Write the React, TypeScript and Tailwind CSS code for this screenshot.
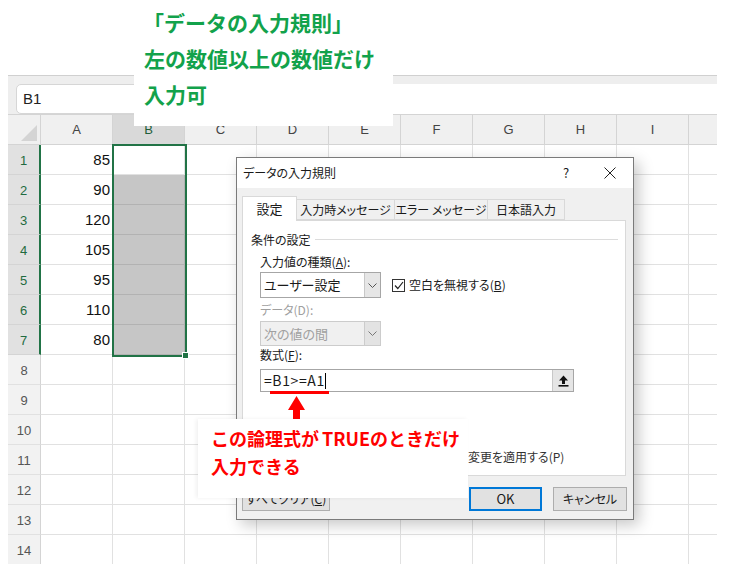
import React from "react";

// Excel sheet with the "データの入力規則" dialog and two callouts on top.

const COLS = ["A", "B", "C", "D", "E", "F", "G", "H", "I"];
const VALUES: (number | null)[] = [85, 90, 120, 105, 95, 110, 80, null, null, null, null, null, null, null];

const jp = "font-['Meiryo_UI','Noto_Sans_CJK_JP',sans-serif] [font-feature-settings:'palt']";

function Chevron({ color = "#555" }: { color?: string }) {
    return (
        <svg width="9" height="5" viewBox="0 0 9 5">
            <path d="M0.5 0.5 L4.5 4.5 L8.5 0.5" fill="none" stroke={color} strokeWidth="1" />
        </svg>
    );
}

function Sheet() {
    return (
        <div className="w-[709px] ml-[8px] mt-[75px] font-['Liberation_Sans',sans-serif]">
            {/* Formula bar */}
            <div className="h-[39px] bg-[#eeeeee] border-t border-[#d0d0d0] pt-[8px] pl-[8px] flex">
                <div className="w-[130px] h-[30px] bg-white border border-[#d6d6d6] rounded-l-[5px] flex items-center pl-[6px] text-[15px] text-[#222]">
                    B1
                </div>
                <div className="flex-1 h-[30px] bg-white" />
            </div>

            {/* Column headers */}
            <div className="flex h-[31px] bg-[#f0f0f0] border-t border-[#d4d4d4] border-b border-[#bdbdbd]">
                <div className="w-[33px] border-r border-[#d4d4d4] flex items-end justify-end pr-[3px] pb-[3px]">
                    <svg width="16" height="16" viewBox="0 0 16 16">
                        <path d="M16 0 L16 16 L0 16 Z" fill="#d4d4d4" />
                    </svg>
                </div>
                {COLS.map((c) => (
                    <div
                        key={c}
                        className={
                            c === "B"
                                ? "w-[72px] bg-[#d9d9d9] border-r border-[#d4d4d4] flex items-center justify-center text-[13px] text-[#1f5e3a]"
                                : "w-[72px] border-r border-[#d4d4d4] flex items-center justify-center text-[13px] text-[#444]"
                        }
                    >
                        {c}
                    </div>
                ))}
                <div className="flex-1" />
            </div>

            {/* Rows */}
            {VALUES.map((v, i) => {
                const sel = i < 7;
                return (
                    <div key={i} className="flex h-[30px]">
                        <div
                            className={
                                sel
                                    ? "w-[33px] bg-[#e1e1e1] border-r-2 border-[#217346] border-b border-b-[#d4d4d4] flex items-center justify-center pt-[3px] text-[13px] text-[#1f6b40]"
                                    : "w-[33px] bg-[#f2f2f2] border-r border-[#d4d4d4] border-b border-b-[#e1e1e1] flex items-center justify-center pt-[3px] text-[13px] text-[#555]"
                            }
                        >
                            {i + 1}
                        </div>
                        <div className="w-[72px] border-r border-b border-[#e1e1e1] flex items-center justify-end pr-[2px] pt-[1px] text-[15px] text-[#111]">
                            {v}
                        </div>
                        <div
                            className={
                                sel && i > 0
                                    ? "w-[72px] bg-[#c6c6c6] border-r border-b border-[#b2b2b2]"
                                    : "w-[72px] border-r border-b border-[#e1e1e1]"
                            }
                        />
                        {COLS.slice(2).map((c) => (
                            <div key={c} className="w-[72px] border-r border-b border-[#e1e1e1]" />
                        ))}
                        <div className="flex-1 border-b border-[#e1e1e1]" />
                    </div>
                );
            })}
        </div>
    );
}

function Dialog() {
    return (
        <div className={`absolute left-[236px] top-[157px] w-[398px] h-[363px] border border-[#7a7a7a] bg-[#f0f0f0] shadow-[5px_5px_14px_rgba(0,0,0,0.22)] text-[#1a1a1a] ${jp}`}>
            {/* Title bar */}
            <div className="h-[30px] bg-white flex items-center pl-[6px] pr-[13px] text-[12px]">
                <span className="flex-1">データの入力規則</span>
                <span className="w-[20px] text-center text-[13px]">?</span>
                <span className="w-[24px]" />
                <span className="w-[20px] flex justify-center">
                    <svg width="12" height="12" viewBox="0 0 12 12">
                        <path d="M0.5 0.5 L11.5 11.5 M11.5 0.5 L0.5 11.5" stroke="#222" strokeWidth="1" />
                    </svg>
                </span>
            </div>

            <div className="px-[5px] pt-[8px]">
                {/* Tabs */}
                <div className="flex items-end h-[24px]">
                    <div className="w-[55px] h-[25px] -mb-px relative z-10 bg-white border border-[#d9d9d9] border-b-0 flex items-center justify-center text-[13px]">
                        設定
                    </div>
                    <div className="w-[98px] h-[21px] border border-l-0 border-[#d9d9d9] flex items-center justify-center text-[12px]">
                        入力時メッセージ
                    </div>
                    <div className="w-[93px] h-[21px] border border-l-0 border-[#d9d9d9] flex items-center justify-center text-[12px]">
                        エラー メッセージ
                    </div>
                    <div className="w-[77px] h-[21px] border border-l-0 border-[#d9d9d9] flex items-center justify-center text-[12px]">
                        日本語入力
                    </div>
                </div>

                {/* Panel */}
                <div className="w-[384px] h-[256px] bg-white border border-[#d9d9d9] pt-[10px] pl-[8px] text-[12px]">
                    <div className="h-[17px] flex items-center pr-[7px]">
                        <span>条件の設定</span>
                        <span className="flex-1 h-px bg-[#dcdcdc] ml-[4px]" />
                    </div>

                    <div className="pl-[9px]">
                        <div className="mt-[5px] h-[17px] flex items-center">
                            入力値の種類(<span className="underline">A</span>):
                        </div>
                        <div className="mt-[2px] flex items-center">
                            <div className="w-[121px] h-[26px] border border-[#a6a6a6] bg-white flex">
                                <span className="flex-1 flex items-center pl-[3px] text-[13px]">ユーザー設定</span>
                                <span className="w-[16px] bg-[#e6e6e6] border-l border-[#c8c8c8] flex items-center justify-center">
                                    <Chevron />
                                </span>
                            </div>
                            <div className="ml-[11px] w-[13px] h-[13px] border border-[#333] bg-white flex items-center justify-center">
                                <svg width="10" height="9" viewBox="0 0 10 9">
                                    <path d="M1 4.5 L3.8 7.5 L9 1" fill="none" stroke="#222" strokeWidth="1.2" />
                                </svg>
                            </div>
                            <span className="ml-[4px] text-[12px]">
                                空白を無視する(<span className="underline">B</span>)
                            </span>
                        </div>

                        <div className="mt-[3px] h-[17px] flex items-center text-[#a0a0a0]">データ(D):</div>
                        <div className="mt-[3px] w-[121px] h-[25px] border border-[#cccccc] bg-[#f0f0f0] flex">
                            <span className="flex-1 flex items-center pl-[3px] text-[13px] text-[#a0a0a0]">次の値の間</span>
                            <span className="w-[16px] bg-[#e3e3e3] border-l border-[#cccccc] flex items-center justify-center">
                                <Chevron color="#777" />
                            </span>
                        </div>

                        <div className="h-[17px] flex items-center">
                            数式(<span className="underline">F</span>):
                        </div>
                        <div className="mt-[6px] w-[314px] h-[23px] border border-[#a6a6a6] bg-white flex">
                            <span className="flex-1 flex items-center pl-[3px] text-[14px] tracking-[0.6px]">
                                =B1&gt;=A1<span className="w-px h-[16px] bg-black" />
                            </span>
                            <span className="w-[21px] bg-[#e5e5e5] border-l border-[#c8c8c8] flex items-center justify-center">
                                <svg width="11" height="12" viewBox="0 0 11 12">
                                    <path d="M5.5 0.5 L10 5.5 L7 5.5 L7 9 L4 9 L4 5.5 L1 5.5 Z" fill="#111" />
                                    <rect x="0.5" y="10" width="10" height="1.6" fill="#111" />
                                </svg>
                            </span>
                        </div>
                    </div>

                    {/* apply-to-all row; its left part lies under the red callout */}
                    <div className="mt-[56px] h-[17px] flex items-center pl-[217px] text-[12px] text-[#333]">
                        変更を適用する(P)
                    </div>
                </div>

                {/* Buttons */}
                <div className="mt-[11px] h-[24px] flex text-[12px]">
                    <div className="w-[88px] border border-[#adadad] bg-[#e1e1e1] flex items-center justify-center">
                        すべてクリア(<span className="underline">C</span>)
                    </div>
                    <div className="ml-auto w-[73px] border-2 border-[#0078d7] bg-[#e1e1e1] flex items-center justify-center text-[13px]">
                        OK
                    </div>
                    <div className="ml-[11px] mr-px w-[74px] border border-[#adadad] bg-[#e1e1e1] flex items-center justify-center">
                        キャンセル
                    </div>
                </div>
            </div>
        </div>
    );
}

export default function App() {
    return (
        <div className="relative w-[747px] h-[564px] overflow-hidden bg-white">
            <Sheet />

            {/* Selection B1:B7 */}
            <div className="absolute left-[112px] top-[144px] w-[75px] h-[213px] border-2 border-[#217346]" />
            <div className="absolute left-[182px] top-[352px] w-[7px] h-[7px] bg-[#217346] border border-white" />

            <Dialog />

            {/* Green callout */}
            <div className="absolute left-[134px] top-0 w-[259px] h-[126px] bg-white pl-[10px] pt-[4px] font-['Noto_Sans_CJK_JP',sans-serif] font-bold text-[21px] leading-[36px] text-[#12a24b]">
                <p className="-ml-[1px]">「データの入力規則」</p>
                <p>左の数値以上の数値だけ</p>
                <p>入力可</p>
            </div>

            {/* Red underline + arrow */}
            <div className="absolute left-[270px] top-[391px] w-[59px] h-[3px] bg-[#ff0000]" />
            <svg className="absolute left-[287px] top-[396px]" width="19" height="24" viewBox="0 0 19 24">
                <path d="M9.5 0 L18 14 L13 14 L13 24 L6 24 L6 14 L1 14 Z" fill="#ff0000" />
            </svg>

            {/* Red callout */}
            <div className="absolute left-[198px] top-[419px] w-[270px] h-[79px] bg-white pl-[13px] pt-[5px] font-['Noto_Sans_CJK_JP',sans-serif] font-bold text-[18px] leading-[28px] text-[#ff0000] whitespace-nowrap shadow-[-2px_0_4px_rgba(0,0,0,0.06)]">
                <p>
                    この論理式が<span className="ml-[3px]">TRUE</span>のときだけ
                </p>
                <p>入力できる</p>
            </div>
        </div>
    );
}
